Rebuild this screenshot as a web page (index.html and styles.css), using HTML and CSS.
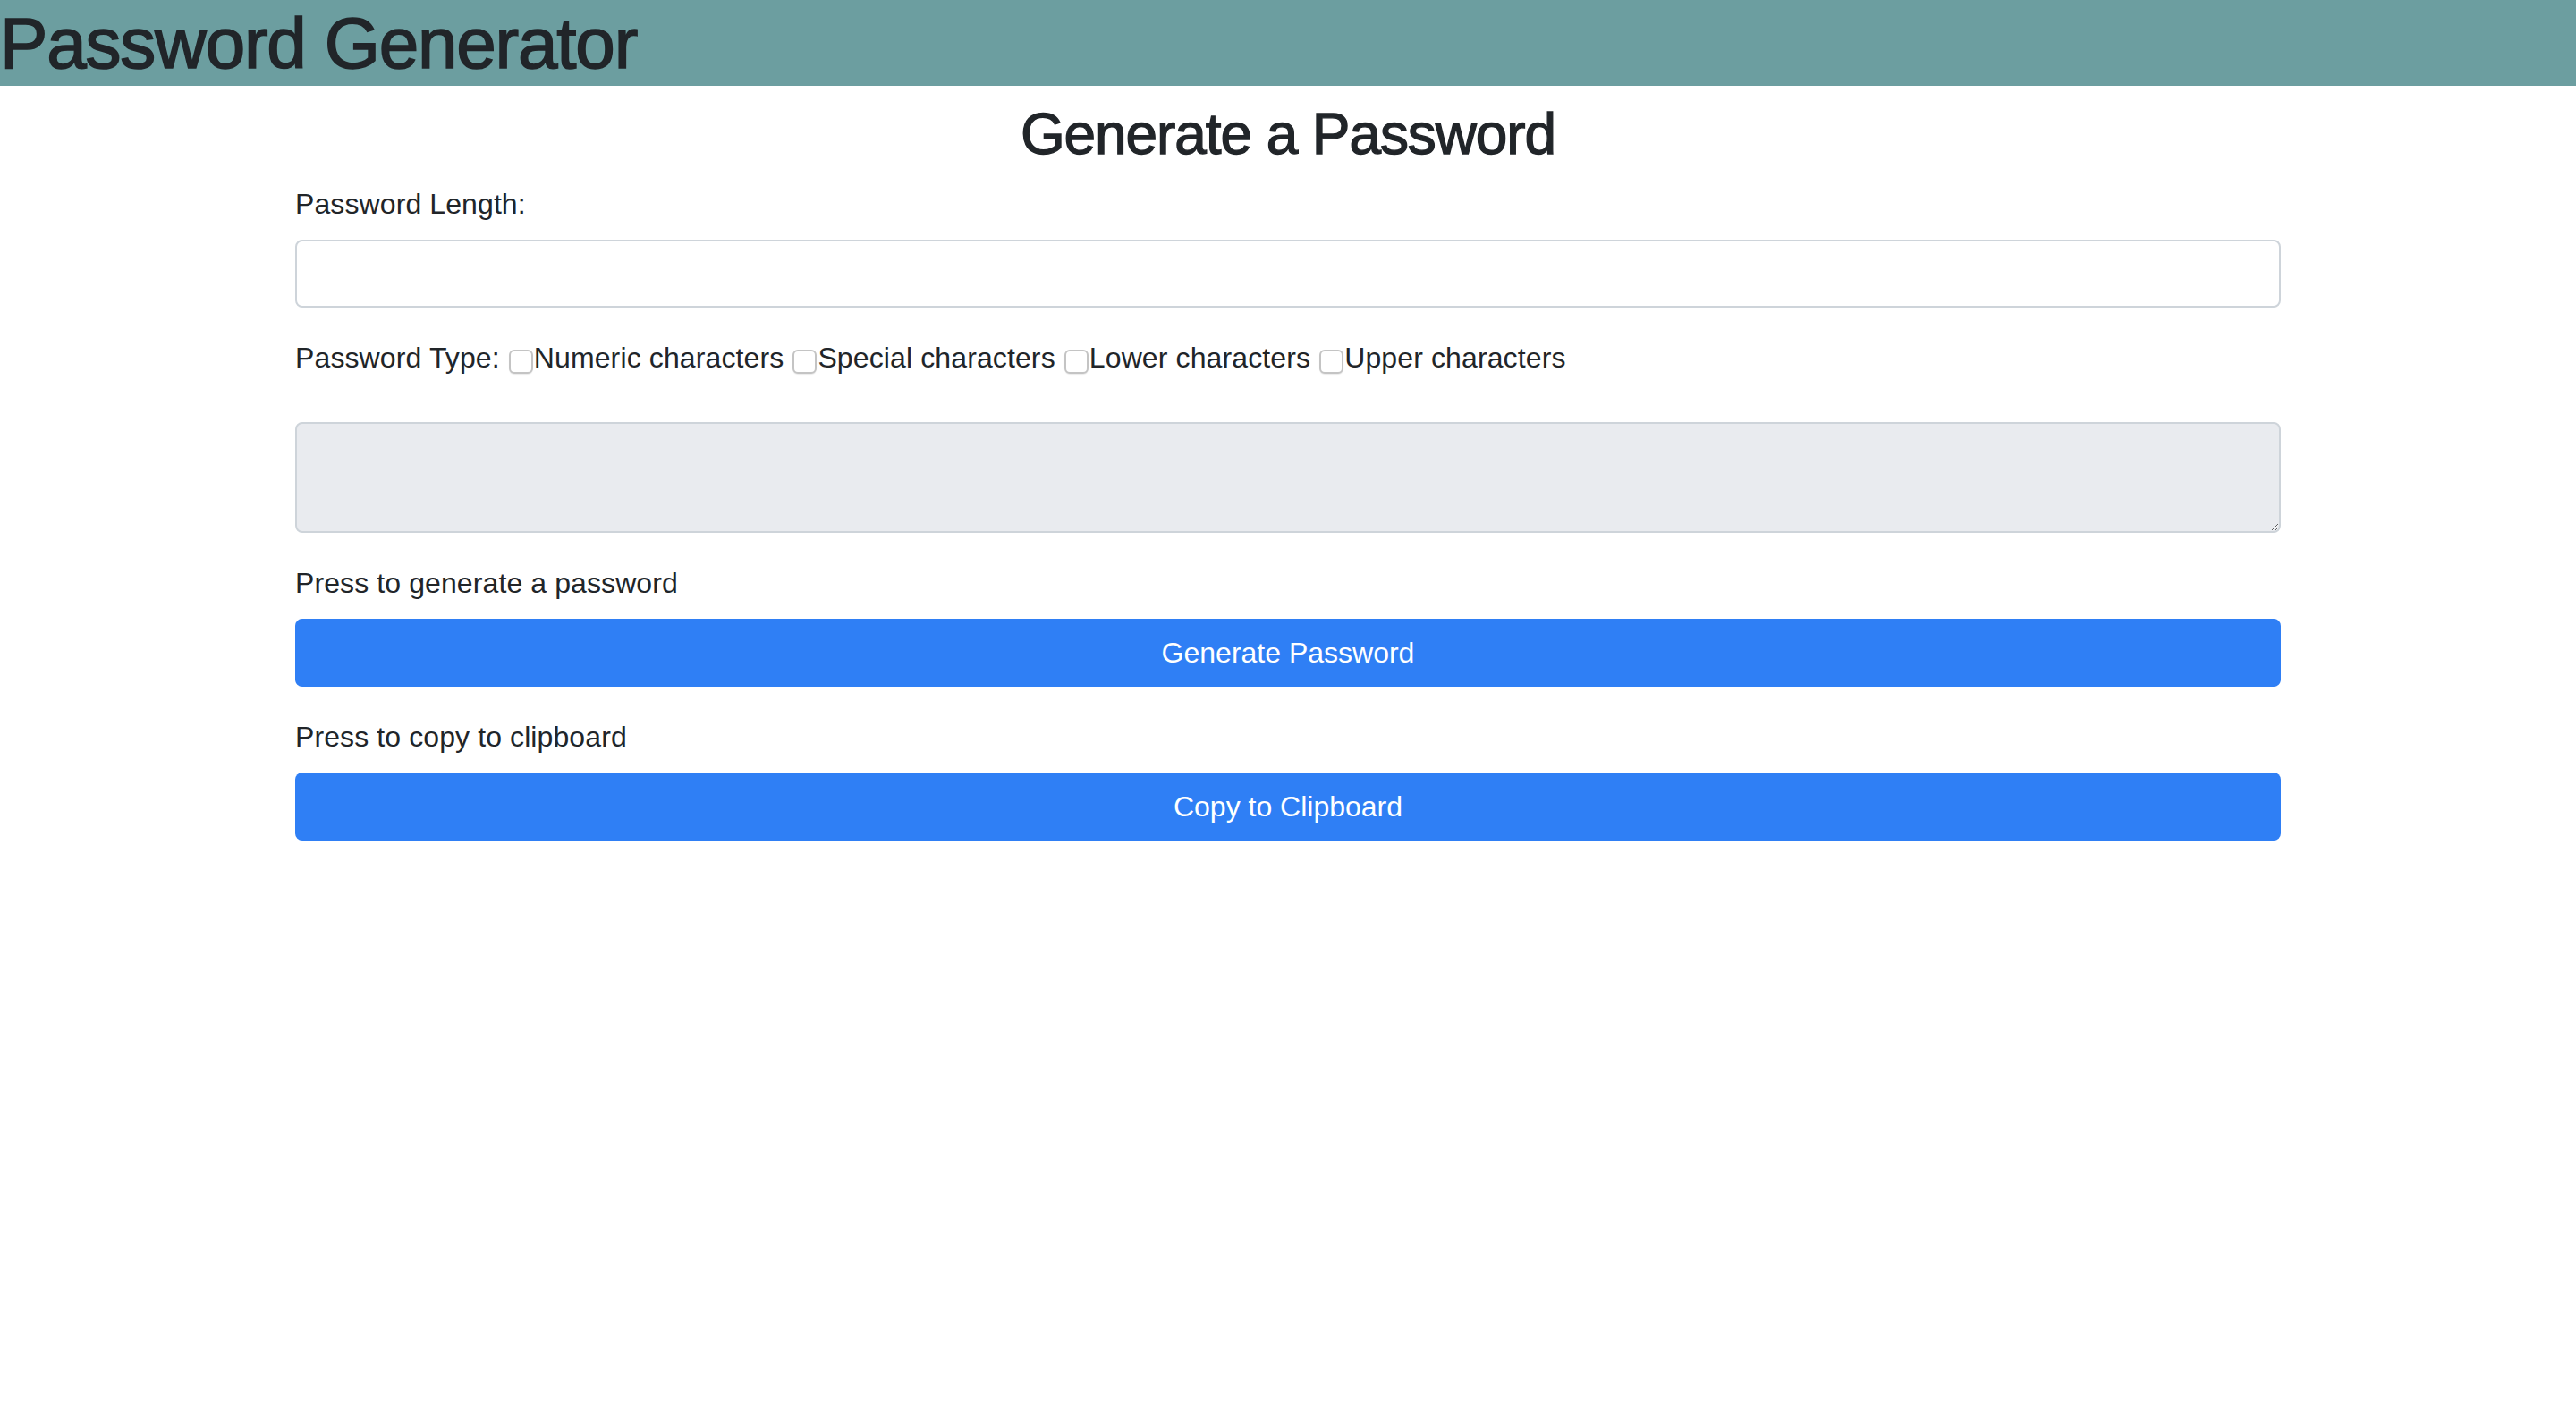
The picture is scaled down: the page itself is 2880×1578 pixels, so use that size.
FILE: index.html
```html
<!DOCTYPE html>
<html lang="en">
<head>
<meta charset="utf-8">
<title>Password Generator</title>
<link rel="stylesheet" href="styles.css">
</head>
<body>
<header class="site-header">
  <h1 class="site-title">Password Generator</h1>
</header>
<main class="container">
  <h2 class="page-title">Generate a Password</h2>
  <div class="form-group">
    <label class="field-label" for="length">Password Length:</label>
    <input class="form-control" id="length" type="text">
  </div>
  <div class="type-row">Password Type: <input type="checkbox" class="check"><span>Numeric characters</span> <input type="checkbox" class="check"><span>Special characters</span> <input type="checkbox" class="check"><span>Lower characters</span> <input type="checkbox" class="check"><span>Upper characters</span></div>
  <div class="form-group">
    <textarea class="form-control output" rows="2" readonly></textarea>
  </div>
  <div class="form-group">
    <label class="field-label">Press to generate a password</label>
    <button class="btn" type="button">Generate Password</button>
  </div>
  <div class="form-group">
    <label class="field-label">Press to copy to clipboard</label>
    <button class="btn" type="button">Copy to Clipboard</button>
  </div>
</main>
</body>
</html>
```
FILE: styles.css
```css
* { box-sizing: border-box; }
html, body { margin: 0; padding: 0; background: #ffffff; }
body {
  font-family: "Liberation Sans", Arial, sans-serif;
  font-size: 32px;
  line-height: 48px;
  color: #212529;
}
.site-header {
  background: #6c9ea0;
  height: 96px;
  overflow: hidden;
}
.site-title {
  margin: 0;
  font-size: 80px;
  line-height: 98px;
  font-weight: 400;
  letter-spacing: -1.2px;
  -webkit-text-stroke: 1.6px #212529;
}
.container {
  width: 2220px;
  margin: 0 auto;
}
.page-title {
  margin: 16px 0 16px;
  text-align: center;
  font-size: 64px;
  line-height: 76px;
  font-weight: 400;
  letter-spacing: -1.1px;
  -webkit-text-stroke: 1.3px #212529;
}
.form-group { margin-bottom: 32px; }
.field-label {
  display: block;
  margin-bottom: 16px;
  letter-spacing: 0.1px;
}
.form-control {
  display: block;
  width: 100%;
  height: 76px;
  margin: 0;
  padding: 12px 24px;
  font: inherit;
  color: #495057;
  background: #ffffff;
  border: 2px solid #ced4da;
  border-radius: 8px;
  outline: none;
}
.output {
  height: 124px;
  background: #e9ebef;
  resize: vertical;
}
.type-row {
  margin-bottom: 48px;
  white-space: nowrap;
  letter-spacing: 0.12px;
}
.check {
  -webkit-appearance: none;
  appearance: none;
  width: 27px;
  height: 27px;
  margin: 0 1px 0 1px;
  border: 2px solid #c4c4c4;
  border-radius: 6px;
  background: #ffffff;
  vertical-align: -7px;
  box-shadow: 0 1px 1px rgba(0,0,0,0.08);
}
.btn {
  display: block;
  width: 100%;
  height: 76px;
  margin: 0;
  padding: 0;
  font: inherit;
  color: #ffffff;
  background: #2f7ff5;
  border: none;
  border-radius: 8px;
  text-align: center;
  cursor: pointer;
}
```
